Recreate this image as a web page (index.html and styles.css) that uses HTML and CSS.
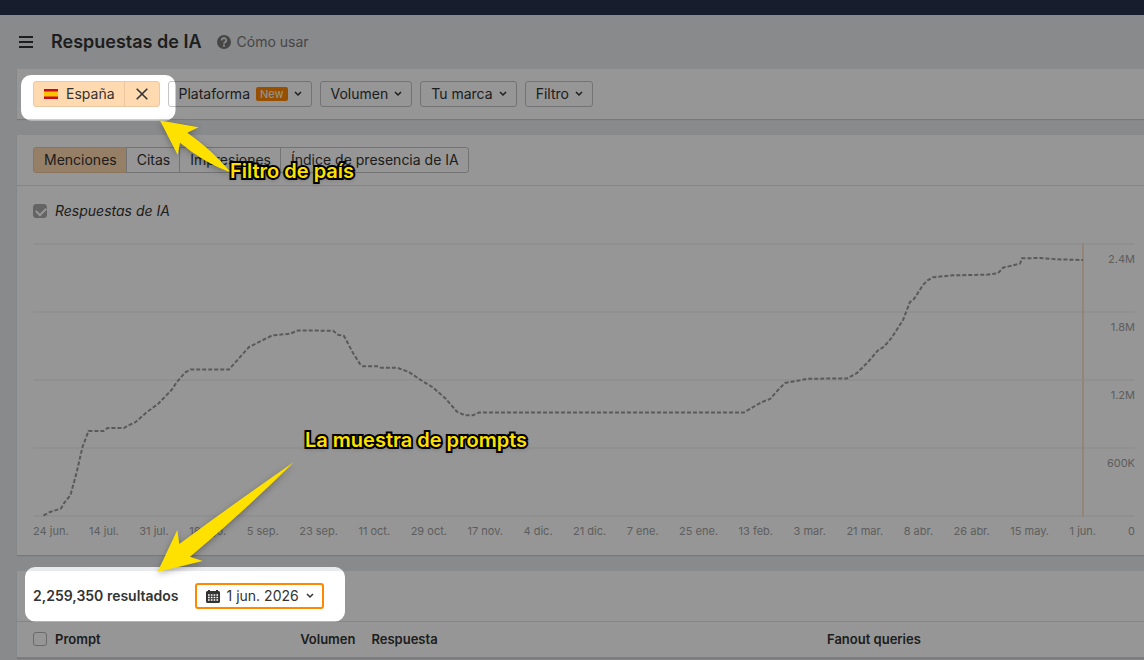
FILE: index.html
```
<!DOCTYPE html>
<html lang="es">
<head>
  <meta charset="UTF-8" />
  <meta name="viewport" content="width=device-width, initial-scale=1" />
  <title>Respuestas de IA</title>
  <link rel="stylesheet" href="styles.css">
</head>
<body>
  <div class="topbar"></div>

  <header class="page-header">
    <button class="menu-btn" aria-label="Menú">
      <svg width="14" height="12" viewBox="0 0 14 12"><path d="M0 1h14M0 6h14M0 11h14" stroke="#333" stroke-width="2"/></svg>
    </button>
    <h1>Respuestas de IA</h1>
    <a href="#" class="help">
      <svg width="14" height="14" viewBox="0 0 14 14">
        <circle cx="7" cy="7" r="7" fill="#777"/>
        <path d="M4.800 5.500a2.200 2.200 0 1 1 3.200 1.700c-.7.4-1 .7-1 1.500" fill="none" stroke="#eee" stroke-width="1.7"/>
        <circle cx="7" cy="10.700" r="1.100" fill="#eee"/>
      </svg>
      Cómo usar
    </a>
  </header>

  <main>
    <section class="panel filters">
      <div class="country">
        <button class="country-name">
          <svg width="14" height="10" viewBox="0 0 14 10"><path fill="#c60b1e" d="M0 0h14v10H0z"/><path fill="#ffc400" d="M0 2.5h14v5H0z"/></svg>
          España
        </button>
        <button class="country-clear" aria-label="Quitar">
          <svg width="12" height="12" viewBox="0 0 12 12"><path d="M.7.7l10.6 10.6M11.3.7L.7 11.3" stroke="#333" stroke-width="1.6"/></svg>
        </button>
      </div>
      <button class="btn">Plataforma <span class="badge">New</span> <svg class="chev" viewBox="0 0 8 6"><path d="M1 1l3 3 3-3"/></svg></button>
      <button class="btn">Volumen <svg class="chev" viewBox="0 0 8 6"><path d="M1 1l3 3 3-3"/></svg></button>
      <button class="btn">Tu marca <svg class="chev" viewBox="0 0 8 6"><path d="M1 1l3 3 3-3"/></svg></button>
      <button class="btn">Filtro <svg class="chev" viewBox="0 0 8 6"><path d="M1 1l3 3 3-3"/></svg></button>
    </section>

    <section class="panel">
      <div class="tabs-row">
        <div class="tabs">
          <button class="tab active">Menciones</button>
          <button class="tab">Citas</button>
          <button class="tab">Impresiones</button>
          <button class="tab">Índice de presencia de IA</button>
        </div>
      </div>
      <label class="legend"><input type="checkbox" class="check" checked> Respuestas de IA</label>
      <div class="chart">
        <div class="plot">
          <svg class="lines" viewBox="33 243 1102 274" preserveAspectRatio="none">
            <path class="grid" d="M33 244H1135M33 312H1135M33 380H1135M33 448H1135M33 516H1135"/>
            <path class="today" d="M1083 243V517"/>
            <polyline class="series" points="43.5,515.5 50,512 61,508.5 64.5,502.5 70.5,495 76.5,473 82.5,447 88.5,431 103.5,431 107.5,428 124,428 128,425.5 135,422.5 147,412 158,404 171.5,390 176.5,382.5 185,372.5 190.5,369.5 229,369.5 249,347 272,335.5 290,333.7 298,330.5 333,330.7 338,334.7 344,336 353,353 360,364 363,366.3 377,366.3 381,367.7 397,367.7 409,372 420.7,380 432.7,387.3 445,398 457,411.7 465,415.3 473,415.3 479,412.5 744,412.5 755,406 762,402 770,399 778,390 785,383 796,381 808,378.7 847,378.5 857,373 868,362 877.7,350.7 884,346.7 891.7,337.7 903,320 910,302 914,299 923,285 928,280 933,277.3 953,275.3 987,274.7 998,273.3 1003,267.7 1020,263.7 1022,258.3 1040,258 1057,259.3 1083,260"/>
          </svg>
          <div class="y-axis"><span>2.4M</span><span>1.8M</span><span>1.2M</span><span>600K</span></div>
        </div>
        <div class="x-axis">
          <div class="dates">
            <span>24 jun.</span><span>14 jul.</span><span>31 jul.</span><span>18 ago.</span><span>5 sep.</span><span>23 sep.</span><span>11 oct.</span><span>29 oct.</span><span>17 nov.</span><span>4 dic.</span><span>21 dic.</span><span>7 ene.</span><span>25 ene.</span><span>13 feb.</span><span>3 mar.</span><span>21 mar.</span><span>8 abr.</span><span>26 abr.</span><span>15 may.</span><span>1 jun.</span>
          </div>
          <span>0</span>
        </div>
      </div>
    </section>

    <section class="panel">
      <div class="results">
        <strong>2,259,350 resultados</strong>
        <button class="date-btn">
          <svg width="14" height="13" viewBox="0 0 14 13">
            <path fill="#333" d="M2 1V0h2v1h6V0h2v1h1l1 1v10l-1 1H1l-1-1V2l1-1z"/>
            <path fill="none" stroke="#fff" stroke-width="1.500" stroke-dasharray="1.700 1.100" d="M2 5H12.100M2 7.500H12.100M2 10H12.100"/>
          </svg>
          1 jun. 2026
          <svg class="chev" viewBox="0 0 8 6"><path d="M1 1l3 3 3-3"/></svg>
        </button>
      </div>
      <table>
        <thead>
          <tr>
            <th class="col-prompt"><label><input type="checkbox" class="check"> Prompt</label></th>
            <th class="col-volume">Volumen</th>
            <th>Respuesta</th>
            <th class="col-fanout">Fanout queries</th>
          </tr>
        </thead>
      </table>
    </section>
  </main>

  <!-- dimmed layer with two highlighted areas, arrows and notes -->
  <div class="overlay">
    <svg class="overlay-art" width="100%" height="100%">
      <path class="dim" fill-rule="evenodd" d="M0 0H6000V4000H0z
        M31 75H165.500a10 10 0 0 1 10 10V110.500a10 10 0 0 1-10 10H31a10 10 0 0 1-10-10V85a10 10 0 0 1 10-10z
        M35 567H335a10 10 0 0 1 10 10V611.500a10 10 0 0 1-10 10H35a10 10 0 0 1-10-10V577a10 10 0 0 1 10-10z"/>
      <path class="arrow" d="M160 120.500L198.500 127.300 187.300 132.700Q211 149 231 172.500 204 163 180 142.700L177.700 155z"/>
      <path class="arrow" d="M157.500 572L177.300 530 179.300 544Q236 502 294 462 240 515 190 556.700L202.700 561z"/>
    </svg>
    <p class="note note-country">Filtro de país</p>
    <p class="note note-prompts">La muestra de prompts</p>
  </div>
</body>
</html>
```
FILE: styles.css
```
* {
  box-sizing: border-box;
}
html, body {
  margin: 0;
  height: 100%;
}
body {
  position: relative;
  overflow: hidden;
  background: #e9eaed;
  color: #333;
  font: 14px/20px Inter, "Liberation Sans", sans-serif;
}
button {
  font: inherit;
  color: inherit;
  cursor: pointer;
}
.topbar {
  height: 15px;
  background: #28324b;
}
.page-header {
  display: flex;
  align-items: center;
  height: 54px;
  padding-left: 19px;
}
.menu-btn {
  display: flex;
  padding: 0;
  margin-right: 18px;
  border: none;
  background: none;
}
h1 {
  margin: 0 15px 0 0;
  font-size: 18px;
  font-weight: 600;
}
.help {
  display: flex;
  align-items: center;
  gap: 6px;
  color: #777;
  text-decoration: none;
}
main {
  display: flex;
  flex-direction: column;
  gap: 16px;
  margin-left: 17px;
}
.panel {
  background: #fff;
  box-shadow: 0 1px 1px rgba(0,0,0,.12);
}
.filters {
  display: flex;
  align-items: center;
  gap: 8px;
  height: 50px;
  padding: 0 16px;
}
.country {
  display: flex;
  height: 26px;
  border: 1px solid #ecc79f;
  border-radius: 3px;
  background: #ffd9b0;
}
.country button {
  display: flex;
  align-items: center;
  border: none;
  background: none;
}
.country .country-name {
  gap: 8px;
  padding: 0 9px 0 10px;
}
.country .country-clear {
  padding: 0 11px;
  border-left: 1px solid #ecc79f;
}
.btn {
  display: flex;
  align-items: center;
  gap: 6px;
  height: 26px;
  padding: 0 9px 0 10px;
  border: 1px solid #c4c4c4;
  border-radius: 3px;
  background: #fff;
}
.badge {
  padding: 0 4px;
  border-radius: 2px;
  background: #ff8800;
  color: #fff;
  font-size: 11px;
  line-height: 14px;
}
.chev {
  width: 8px;
  height: 6px;
  fill: none;
  stroke: #333;
  stroke-width: 1.5;
}
.tabs-row {
  padding: 12px 16px;
  border-bottom: 1px solid #e2e3e5;
}
.tabs {
  display: flex;
}
.tab {
  height: 26px;
  padding: 0 9px 0 10px;
  margin-left: -1px;
  border: 1px solid #c4c4c4;
  background: #fff;
}
.tab:first-child {
  margin-left: 0;
  border-radius: 3px 0 0 3px;
}
.tab:last-child {
  border-radius: 0 3px 3px 0;
}
.tab.active {
  border-color: #ecc79f;
  background: #ffd9b0;
}
.legend {
  display: flex;
  align-items: center;
  gap: 8px;
  padding: 15px 16px 22px;
  font-style: italic;
}
.check {
  appearance: none;
  width: 14px;
  height: 14px;
  margin: 0;
  border: 1px solid #b4b4b4;
  border-radius: 3px;
  background: #fff;
}
.check:checked {
  position: relative;
  border-color: #aaa;
  background: #aaa;
}
.check:checked::after {
  content: "";
  position: absolute;
  left: 2px;
  top: 2px;
  width: 8px;
  height: 5px;
  border: solid #fff;
  border-width: 0 0 2px 2px;
  transform: rotate(-45deg);
}
.chart {
  padding: 0 9px 14px 16px;
  color: #a0a0a0;
  font-size: 11px;
}
.plot {
  display: grid;
}
.lines, .y-axis {
  grid-area: 1 / 1;
}
.lines {
  width: 100%;
  height: 274px;
}
.lines path, .lines polyline {
  fill: none;
  vector-effect: non-scaling-stroke;
}
.lines .grid {
  stroke: #f5f5f5;
  stroke-width: 2;
}
.lines .today {
  stroke: #fae3cb;
  stroke-width: 2;
}
.lines .series {
  stroke: #999;
  stroke-width: 2;
  stroke-dasharray: 4 2;
}
.y-axis {
  display: flex;
  flex-direction: column;
  justify-self: end;
  text-align: right;
}
.y-axis span {
  height: 68px;
  padding-top: 6px;
}
.x-axis {
  display: flex;
  justify-content: space-between;
  padding-top: 4px;
}
.dates {
  display: flex;
  flex: 1;
  justify-content: space-between;
  margin-right: 32px;
}
.results {
  display: flex;
  align-items: center;
  gap: 16px;
  height: 51px;
  padding: 0 16px;
  border-bottom: 1px solid #e2e3e5;
}
.results strong {
  font-weight: 600;
}
.date-btn {
  display: flex;
  align-items: center;
  gap: 7px;
  height: 26px;
  padding: 0 8px 0 9px;
  border: 2px solid #ff8800;
  border-radius: 3px;
  background: #fff;
}
table {
  width: 100%;
  border-collapse: collapse;
  table-layout: fixed;
}
th {
  height: 35px;
  padding: 0 0 0 16px;
  border-bottom: 1px solid #d8d9dc;
  font-size: 13px;
  font-weight: 600;
  text-align: left;
}
th label {
  display: flex;
  align-items: center;
  gap: 8px;
}
.col-prompt {
  width: 24%;
}
.col-volume {
  width: 68px;
  padding: 0;
  text-align: right;
}
.col-fanout {
  width: 333px;
}
.overlay {
  position: absolute;
  inset: 0;
  overflow: hidden;
  pointer-events: none;
}
.overlay-art {
  display: block;
}
.dim {
  fill: rgba(0,0,0,.41);
}
.arrow {
  fill: #ffe100;
  filter: drop-shadow(0 2px 3px rgba(0,0,0,.3));
}
.note {
  position: absolute;
  margin: 0;
  color: #ffe100;
  font-size: 20px;
  font-weight: 600;
  line-height: 24px;
  white-space: nowrap;
  -webkit-text-stroke: 4px #000;
  paint-order: stroke fill;
  text-shadow: 0 2px 4px rgba(0,0,0,.3);
}
.note-country {
  left: 230px;
  top: 159px;
}
.note-prompts {
  left: 305px;
  top: 428px;
}
```
